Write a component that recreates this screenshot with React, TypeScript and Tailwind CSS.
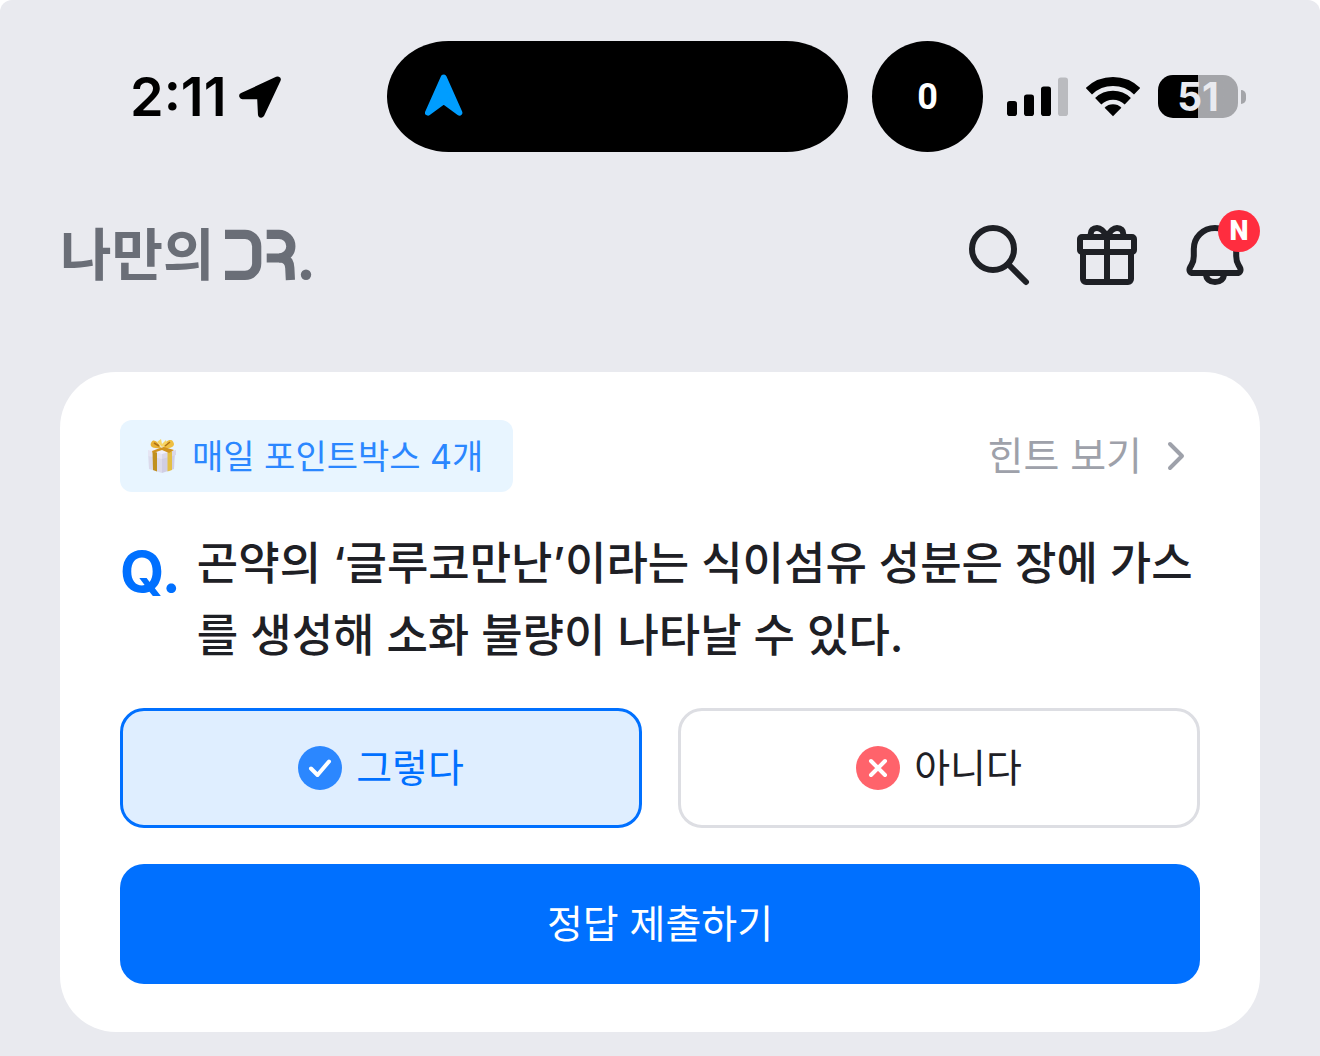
import { useState } from 'react';
import clsx from 'clsx';

type Answer = 'yes' | 'no';

function LocationArrow() {
  return (
    <svg viewBox="0 0 42 42" className="h-[42px] w-[42px]" aria-hidden="true">
      <path
        d="M38.5 3.7 3.5 20H21.3L22.2 38.4Z"
        fill="#000"
        stroke="#000"
        strokeWidth="6.5"
        strokeLinejoin="round"
      />
    </svg>
  );
}

function NavigationArrow() {
  return (
    <svg viewBox="0 0 38 42" className="h-[42px] w-[38px]" aria-hidden="true">
      <path
        d="M18.7 3.5 3 38.6 18.7 27 34.4 38.6Z"
        fill="#009dff"
        stroke="#009dff"
        strokeWidth="6"
        strokeLinejoin="round"
      />
    </svg>
  );
}

function SignalBars() {
  return (
    <svg viewBox="0 0 61 40" className="h-10 w-[61px]" aria-hidden="true">
      <rect x="0" y="24" width="10" height="15" rx="2.8" />
      <rect x="17" y="17.5" width="10" height="21.5" rx="2.8" />
      <rect x="34" y="9.5" width="10" height="29.5" rx="2.8" />
      <rect x="51" y="0.5" width="10" height="38.5" rx="2.8" fill="#babbbf" />
    </svg>
  );
}

function WifiIcon() {
  return (
    <svg viewBox="0 0 54 40" className="h-10 w-[54px]" fill="none" aria-hidden="true">
      <path d="M2.9 14.2A35 35 0 0 1 51.1 14.2" stroke="#000" strokeWidth="9" />
      <path d="M12.2 24.2A21.5 21.5 0 0 1 41.8 24.2" stroke="#000" strokeWidth="9" />
      <path d="M27 39.3 18.6 30.7A12.2 12.2 0 0 1 35.4 30.7Z" fill="#000" />
    </svg>
  );
}

function Battery({ level }: { level: number }) {
  return (
    <div className="flex items-center gap-[3px]">
      <div className="flex h-[43px] w-20 items-center justify-center rounded-[15px] bg-linear-to-r from-black from-50% to-[#a4a5a9] to-50% text-[39px] leading-none font-bold text-[#e9eaef]">
        {level}
      </div>
      <div className="h-[14px] w-[5px] rounded-r-full bg-[#a4a5a9]" />
    </div>
  );
}

function StatusBar() {
  return (
    <div className="flex items-center justify-between pt-[41px] pr-[74px] pl-[130px]">
      <div className="flex items-center gap-3">
        <span className="text-[54px] leading-none font-semibold text-black">2:11</span>
        <LocationArrow />
      </div>
      <div className="flex items-center gap-6">
        <div className="flex h-[111px] w-[461px] items-center rounded-[62px/56px] bg-black pb-1 pl-[38px]">
          <NavigationArrow />
        </div>
        <div className="flex h-[111px] w-[111px] items-center justify-center rounded-full bg-black font-['Roboto',sans-serif] text-[36px] font-bold text-white">
          0
        </div>
        <div className="flex items-center gap-[18px]">
          <SignalBars />
          <WifiIcon />
          <Battery level={51} />
        </div>
      </div>
    </div>
  );
}

function Logo() {
  return (
    <a href="#" className="flex items-center gap-2.5 text-[#6a6e77]">
      <span className="text-[56px] leading-[72px] font-bold">나만의</span>
      <svg viewBox="0 0 88 56" className="h-14 w-[88px]" fill="none" role="img" aria-label="DR.">
        <g stroke="currentColor" strokeWidth="9.2">
          <path d="M0 7.3H20a11.7 12 0 0 1 11.7 12V36.4a11.7 12 0 0 1-11.7 12H0" />
          <path d="M41.7 7.3H54a11.8 11.8 0 0 1 0 23.7H41.7" />
          <path d="M54 31q10.4 0 10.8 10l.6 12" />
        </g>
        <circle cx="81" cy="47.7" r="5.2" fill="currentColor" />
      </svg>
    </a>
  );
}

function TopBar() {
  const iconClass = 'h-[72px] w-[72px] fill-none stroke-[#1e2025] stroke-6';

  return (
    <header className="flex items-center justify-between pt-[67px] pr-[69px] pl-[60px]">
      <Logo />
      <div className="flex gap-9">
        <button type="button" aria-label="검색">
          <svg viewBox="0 0 72 72" className={iconClass} strokeLinecap="round">
            <circle cx="30" cy="30" r="21" />
            <path d="M45 45 63 63" />
          </svg>
        </button>
        <button type="button" aria-label="선물함">
          <svg viewBox="0 0 72 72" className={iconClass} strokeLinejoin="round">
            <rect x="9" y="18" width="54" height="15" rx="2" />
            <path d="M12 33V60a3 3 0 0 0 3 3H57a3 3 0 0 0 3-3V33M36 18V63" />
            <path d="M36 18C33 12 29.5 9 26 9c-4 0-6.3 2.5-6.3 6v3M36 18c3-6 6.5-9 10-9 4 0 6.3 2.5 6.3 6v3" />
          </svg>
        </button>
        <button type="button" aria-label="알림" className="relative">
          <svg viewBox="0 0 72 72" className={iconClass} strokeLinejoin="round">
            <path d="M36 9C24 9 14.8 18.5 14.8 30V37c0 4-.8 6.5-2.3 9l-1.3 2.3C9.5 51.3 11 54 14 54H58c3 0 4.5-2.7 2.8-5.7L59.5 46c-1.5-2.5-2.3-5-2.3-9V30C57.2 18.5 48 9 36 9Z" />
            <path d="M27 55c0 5 4 8 9 8s9-3 9-8" />
          </svg>
          <span className="absolute -top-[9px] -right-[9px] flex h-[42px] w-[42px] items-center justify-center rounded-full bg-[#ff2d3f] font-['Roboto',sans-serif] text-[27px] leading-none font-black text-white">
            N
          </span>
        </button>
      </div>
    </header>
  );
}

function GiftBox() {
  return (
    <svg viewBox="0 0 36 36" className="h-9 w-9" aria-hidden="true">
      <path d="M4 14 18 17V35L5 31Z" fill="#dcdbec" />
      <path d="M18 17 31 13 30 31 18 35Z" fill="#d0cee4" />
      <path d="M4 12 17 9 32 12 18 16Z" fill="#f1f0fa" />
      <path d="M4 12 18 16V21L4 18Z" fill="#e6e5f3" />
      <path d="M18 16 32 12V17L18 21Z" fill="#dad8ea" />
      <path d="M8.5 13.5 13 14.5V33.5L9 32Z" fill="#c0901f" />
      <path d="M23.5 14.5 28 13.3V32L23.5 33.5Z" fill="#e3bf45" />
      <path d="M17 10C14 3 9 .5 7.5 4 5 8 8 11 17 10Z" fill="#e8b236" />
      <path d="M19 10C21 2 27 .5 29 3.5 32 8 28 11 19 10Z" fill="#eebf42" />
      <path d="M16 10 8 13 9 15 18 12 25 15 30 12 20 9Z" fill="#d0931f" />
      <path d="M13 4 17 1 18 6 22 2 23 6 18 9Z" fill="#f7d565" />
      <path d="M10 5 15 8M26 4 21 8" stroke="#b07216" strokeWidth="1.5" />
    </svg>
  );
}

export default function App() {
  const [answer, setAnswer] = useState<Answer>('yes');

  const answerClass = (value: Answer) =>
    clsx(
      'flex h-[120px] items-center justify-center gap-3.5 rounded-3xl border-3 text-[39px]',
      answer === value
        ? 'border-[#0070ff] bg-[#dfeeff] text-[#0070ff]'
        : 'border-[#dddee3] bg-white text-[#1e2025]'
    );

  return (
    <div className="bg-white">
      <div className="min-h-screen rounded-t-[12px] bg-[#e9eaef] pb-6 font-['Inter','Noto_Sans_CJK_KR',sans-serif] text-[#1e2025]">
        <StatusBar />
        <TopBar />

        {/* Daily quiz */}
        <main className="mx-[60px] mt-[81px] flex flex-col gap-9 rounded-[56px] bg-white px-[60px] py-12">
          <div className="flex items-center justify-between">
            <div className="flex h-[72px] items-center gap-3 rounded-xl bg-[#e8f5ff] pr-[30px] pl-6 text-[34px] text-[#2b87ff]">
              <GiftBox />
              매일 포인트박스 4개
            </div>
            <button type="button" className="flex h-[72px] items-center gap-2.5 text-[39px] text-[#9ea1aa]">
              힌트 보기
              <svg viewBox="0 0 48 48" className="h-12 w-12" fill="none" aria-hidden="true">
                <path
                  d="M18 12 30 24 18 36"
                  stroke="currentColor"
                  strokeWidth="4"
                  strokeLinecap="round"
                  strokeLinejoin="round"
                />
              </svg>
            </button>
          </div>

          <div className="flex gap-4">
            <span className="pt-2 text-[57px] leading-[72px] font-bold text-[#0070ff]">Q.</span>
            <p className="flex-1 text-[45px] leading-[72px] font-medium">
              곤약의 ‘글루코만난’이라는 식이섬유 성분은 장에 가스를 생성해 소화 불량이 나타날 수 있다.
            </p>
          </div>

          <div className="grid grid-cols-2 gap-9">
            <button
              type="button"
              aria-pressed={answer === 'yes'}
              onClick={() => setAnswer('yes')}
              className={answerClass('yes')}
            >
              <svg viewBox="0 0 44 44" className="h-11 w-11" fill="none" aria-hidden="true">
                <circle cx="22" cy="22" r="22" fill="#2b87ff" />
                <path
                  d="M13 22.5 19.5 29 31 15.5"
                  stroke="#fff"
                  strokeWidth="4"
                  strokeLinecap="round"
                  strokeLinejoin="round"
                />
              </svg>
              그렇다
            </button>
            <button
              type="button"
              aria-pressed={answer === 'no'}
              onClick={() => setAnswer('no')}
              className={answerClass('no')}
            >
              <svg viewBox="0 0 44 44" className="h-11 w-11" fill="none" aria-hidden="true">
                <circle cx="22" cy="22" r="22" fill="#ff636b" />
                <path d="M15 15 29 29M29 15 15 29" stroke="#fff" strokeWidth="4" strokeLinecap="round" />
              </svg>
              아니다
            </button>
          </div>

          <button type="button" className="h-[120px] rounded-3xl bg-[#0070ff] text-[39px] text-white">
            정답 제출하기
          </button>
        </main>
      </div>
    </div>
  );
}
